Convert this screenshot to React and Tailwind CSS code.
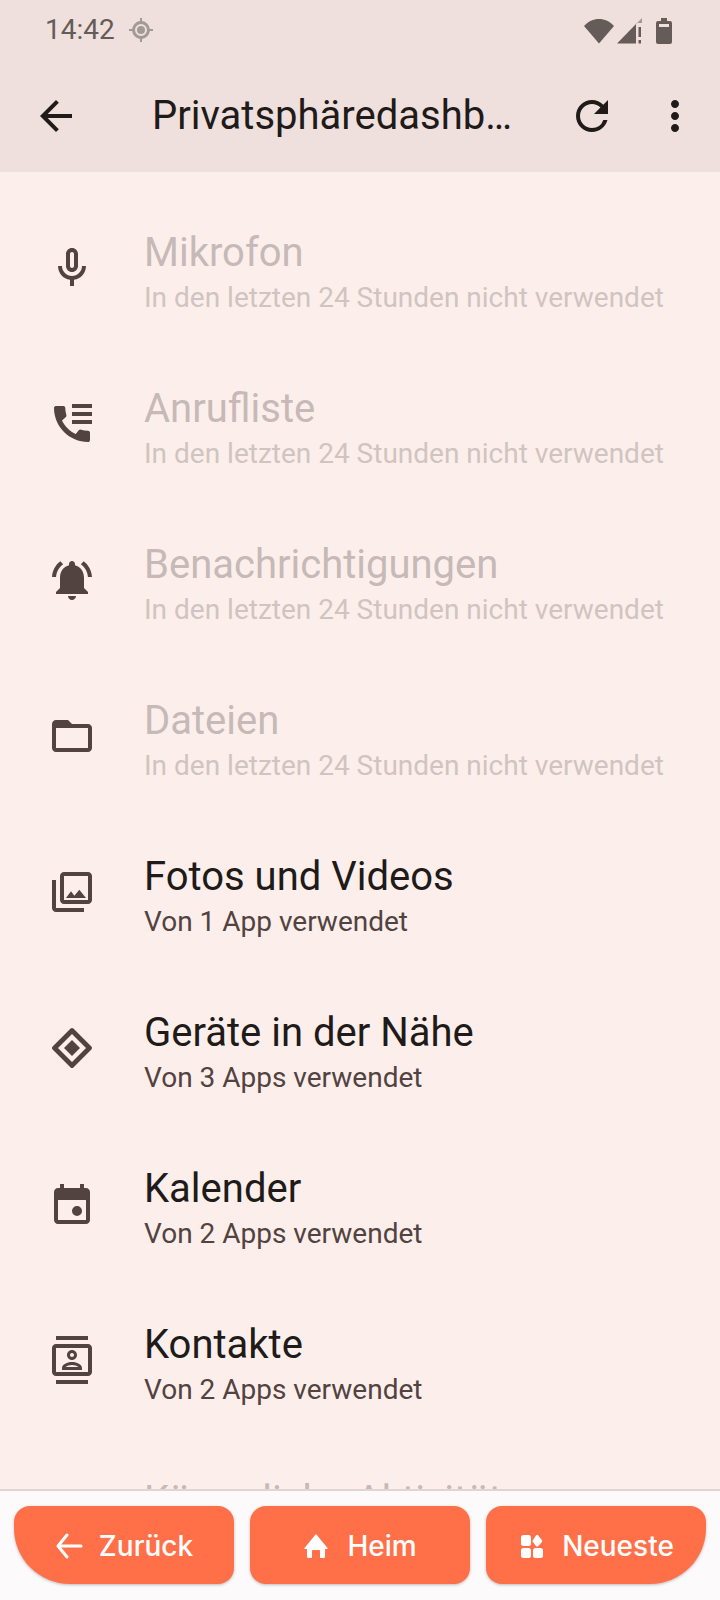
import { MdArrowBack, MdMoreVert, MdRefresh } from "react-icons/md";

const rows = [
  { title: "Mikrofon", sub: "In den letzten 24 Stunden nicht verwendet", off: true, icon: "mic" },
  { title: "Anrufliste", sub: "In den letzten 24 Stunden nicht verwendet", off: true, icon: "calls" },
  { title: "Benachrichtigungen", sub: "In den letzten 24 Stunden nicht verwendet", off: true, icon: "bell" },
  { title: "Dateien", sub: "In den letzten 24 Stunden nicht verwendet", off: true, icon: "folder" },
  { title: "Fotos und Videos", sub: "Von 1 App verwendet", icon: "photos" },
  { title: "Geräte in der Nähe", sub: "Von 3 Apps verwendet", icon: "nearby" },
  { title: "Kalender", sub: "Von 2 Apps verwendet", icon: "calendar" },
  { title: "Kontakte", sub: "Von 2 Apps verwendet", icon: "contacts" },
  { title: "Körperliche Aktivität", sub: "In den letzten 24 Stunden nicht verwendet", off: true, icon: "mic" },
];

const paths = {
  mic: "M12 14c1.66 0 3-1.34 3-3V5c0-1.66-1.34-3-3-3S9 3.34 9 5v6c0 1.66 1.34 3 3 3zm-1-9c0-.55.45-1 1-1s1 .45 1 1v6c0 .55-.45 1-1 1s-1-.45-1-1V5zm6 6c0 2.76-2.24 5-5 5s-5-2.24-5-5H5c0 3.53 2.61 6.43 6 6.92V21h2v-3.08c3.39-.49 6-3.39 6-6.92h-2z",
  calls: "M12 2h10v2H12zM12 6h10v2H12zM12 10h10v2H12zM20.01 15.38c-1.23 0-2.42-.2-3.53-.56-.35-.12-.74-.03-1.01.24l-1.57 1.97c-2.83-1.35-5.48-3.9-6.89-6.83l1.95-1.66c.27-.28.35-.67.24-1.02-.37-1.11-.56-2.3-.56-3.53 0-.54-.45-.99-.99-.99H4.19C3.65 3 3 3.24 3 3.99 3 13.28 10.73 21 20.01 21c.71 0 .99-.63.99-1.18v-3.45c0-.54-.45-.99-.99-.99z",
  bell: "M7.58 4.08L6.15 2.65C3.75 4.48 2.17 7.3 2.03 10.5h2c.15-2.65 1.51-4.97 3.55-6.42zm12.39 6.42h2c-.15-3.2-1.73-6.02-4.12-7.85l-1.42 1.43c2.02 1.45 3.39 3.77 3.54 6.42zM18 11c0-3.07-1.64-5.64-4.5-6.32V4c0-.83-.67-1.5-1.5-1.5s-1.5.67-1.5 1.5v.68C7.63 5.36 6 7.92 6 11v5l-2 2v1h16v-1l-2-2v-5zm-6 11c.14 0 .27-.01.4-.04.65-.14 1.18-.58 1.44-1.18.1-.24.15-.5.15-.78h-4c.01 1.1.9 2 2.01 2z",
  folder: "M20 6h-8l-2-2H4c-1.1 0-1.99.9-1.99 2L2 18c0 1.1.9 2 2 2h16c1.1 0 2-.9 2-2V8c0-1.1-.9-2-2-2zm0 12H4V8h16v10z",
  photos: "M20 4v12H8V4h12m0-2H8c-1.1 0-2 .9-2 2v12c0 1.1.9 2 2 2h12c1.1 0 2-.9 2-2V4c0-1.1-.9-2-2-2zm-8.5 9.67l1.69 2.26 2.48-3.1L19 15H9zM2 6v14c0 1.1.9 2 2 2h14v-2H4V6H2z",
  nearby: "M12 2c-.3 0-.5.1-.7.3l-9 9c-.4.4-.4 1 0 1.4l9 9c.4.4 1 .4 1.4 0l9-9c.4-.4.4-1 0-1.4l-9-9c-.2-.2-.4-.3-.7-.3zM12 5l7 7-7 7-7-7 7-7zM12 8l-4 4 4 4 4-4-4-4z",
  calendar: "M19 4h-1V2h-2v2H8V2H6v2H5c-1.1 0-2 .9-2 2v14c0 1.1.9 2 2 2h14c1.1 0 2-.9 2-2V6c0-1.1-.9-2-2-2zm0 16H5V10h14v10zM14.5 13a2.5 2.5 0 1 0 0 5 2.5 2.5 0 0 0 0-5z",
  contacts: "M4 0h16v2H4zM4 22h16v2H4zM20 4H4c-1.1 0-2 .9-2 2v12c0 1.1.9 2 2 2h16c1.1 0 2-.9 2-2V6c0-1.1-.9-2-2-2zm0 14H4V6h16v12zM12 12c1.38 0 2.5-1.12 2.5-2.5S13.38 7 12 7 9.5 8.12 9.5 9.5 10.62 12 12 12zm0-3.5c.55 0 1 .45 1 1s-.45 1-1 1-1-.45-1-1 .45-1 1-1zm5 7.49C17 13.9 13.69 13 12 13s-5 .9-5 2.99V17h10v-1.01zm-8.19-.49c.61-.52 2.03-1 3.19-1 1.17 0 2.59.48 3.2 1H8.81z",
};

function RowIcon({ name }) {
  return (
    <svg viewBox="0 0 24 24" className="h-12 w-12 shrink-0 fill-[#524341]">
      <path d={paths[name]} />
    </svg>
  );
}

function StatusBar() {
  return (
    <div className="flex h-[60px] items-center justify-between pl-[45px] pr-[48px] text-[#655b59]">
      <div className="flex items-center gap-[14px]">
        <span className="text-[28px] leading-none">14:42</span>
        <svg viewBox="0 0 24 24" className="h-6 w-6 fill-[#a39a97]">
          <path d="M11 0h2v3.100a9 9 0 0 1 7.900 7.900H24v2h-3.100a9 9 0 0 1-7.900 7.900V24h-2v-3.100A9 9 0 0 1 3.100 13H0v-2h3.100A9 9 0 0 1 11 3.100V0zm1 6a6 6 0 1 0 0 12 6 6 0 0 0 0-12zm0 2a4 4 0 1 1 0 8 4 4 0 0 1 0-8z" />
        </svg>
      </div>
      <div className="mt-[2px] flex items-center gap-[3px]">
        <svg viewBox="0 0 30 26" className="h-[26px] w-[30px] fill-[#655b59]">
          <path d="M15 25.500 0 8C4 3.500 9.500 1 15 1s11 2.500 15 7z" />
        </svg>
        <svg viewBox="0 0 26 26" className="h-[26px] w-[26px]">
          <path d="M0 25.500 19 6v19.500z" fill="#655b59" />
          <path d="M19 6 25 0v5h-6z" fill="#a39a97" />
          <path d="M21.500 9h2.500v10h-2.500zM21.500 22h2.500v3.500h-2.500z" fill="#655b59" />
        </svg>
        <svg viewBox="0 0 16 26" className="ml-[10px] h-[26px] w-4">
          <path d="M5 0h6v3h3a2 2 0 0 1 2 2v19a2 2 0 0 1-2 2H2a2 2 0 0 1-2-2V5a2 2 0 0 1 2-2h3z" fill="#655b59" />
          <path d="M3 6h10v3H3z" fill="#efe0dd" />
        </svg>
      </div>
    </div>
  );
}

function AppBar() {
  return (
    <div className="flex h-[112px] items-center text-[#201a19]">
      <MdArrowBack className="ml-[32px] h-12 w-12 shrink-0" />
      <div className="ml-[72px] w-[364px] truncate text-[40px] leading-[48px]">Privatsphäredashboard</div>
      <MdRefresh className="ml-[52px] h-12 w-12 shrink-0" />
      <MdMoreVert className="ml-[35px] h-12 w-12 shrink-0" />
    </div>
  );
}

function NavButton({ gap, corner, children }) {
  return (
    <button type="button" className={`flex h-[78px] w-[220px] shrink-0 items-center justify-center rounded-[16px] bg-[#ff7049] pt-[1px] font-['Inter',sans-serif] text-[28px] font-medium text-white shadow-[0_1px_3px_rgba(0,0,0,0.25)] ${gap} ${corner}`}>
      {children}
    </button>
  );
}

export default function App() {
  return (
    <div className="flex h-[1600px] w-[720px] flex-col overflow-hidden bg-[#fcefeb] font-['Roboto',sans-serif]">
      <div className="bg-[#efe0dd]">
        <StatusBar />
        <AppBar />
      </div>

      <div className="min-h-0 flex-1 overflow-hidden pt-[18px]">
        {rows.map((row) => (
          <div key={row.title} className="flex h-[156px] items-center pl-[48px]">
            <RowIcon name={row.icon} />
            <div className="ml-[48px] min-w-0 pt-[10px]">
              <div className={`text-[40px] leading-[48px] ${row.off ? "text-[#c6b9b7]" : "text-[#201a19]"}`}>{row.title}</div>
              <div className={`text-[28px] leading-[41px] ${row.off ? "text-[#d0c4c1]" : "text-[#524341]"}`}>{row.sub}</div>
            </div>
          </div>
        ))}
      </div>

      <div className="flex h-[111px] shrink-0 gap-[16px] border-t-2 border-[#e2d5d1] bg-[#fcfafa] px-[14px] pt-[15px]">
        <NavButton gap="gap-[16px]" corner="rounded-bl-[56px]">
          <svg viewBox="0 0 28 28" className="h-7 w-7 fill-none stroke-white stroke-[3]" strokeLinecap="round" strokeLinejoin="round">
            <path d="M26 14H3M12 3 3 14l9 11" />
          </svg>
          Zurück
        </NavButton>
        <NavButton gap="gap-[19px] pl-[1px]" corner="">
          <svg viewBox="0 0 24 24" className="h-6 w-6 fill-white">
            <path d="M12 0 23.500 14c.3.5 0 1-.5 1h-2v7.500c0 .8-.6 1.500-1.500 1.500H16v-7c0-.6-.4-1-1-1H9c-.6 0-1 .4-1 1v7H4.500C3.600 24 3 23.300 3 22.500V15H1c-.5 0-.8-.5-.5-1z" />
          </svg>
          Heim
        </NavButton>
        <NavButton gap="gap-[18px] pl-[2px]" corner="rounded-br-[56px]">
          <svg viewBox="0 0 24 24" className="h-6 w-6 fill-white">
            <rect x="1" y="1" width="10" height="11" rx="2.500" />
            <path d="M16 1.500c.8-1 1.500-1 2.300 0l3.500 4.500c.6.800.6 1.500 0 2.300l-3.500 3.700c-.8.800-1.500.8-2.300 0l-3-3.700c-.6-.8-.6-1.500 0-2.300z" />
            <rect x="1" y="14" width="10" height="10" rx="2.500" />
            <rect x="13" y="14" width="10" height="10" rx="2.500" />
          </svg>
          Neueste
        </NavButton>
      </div>
    </div>
  );
}
